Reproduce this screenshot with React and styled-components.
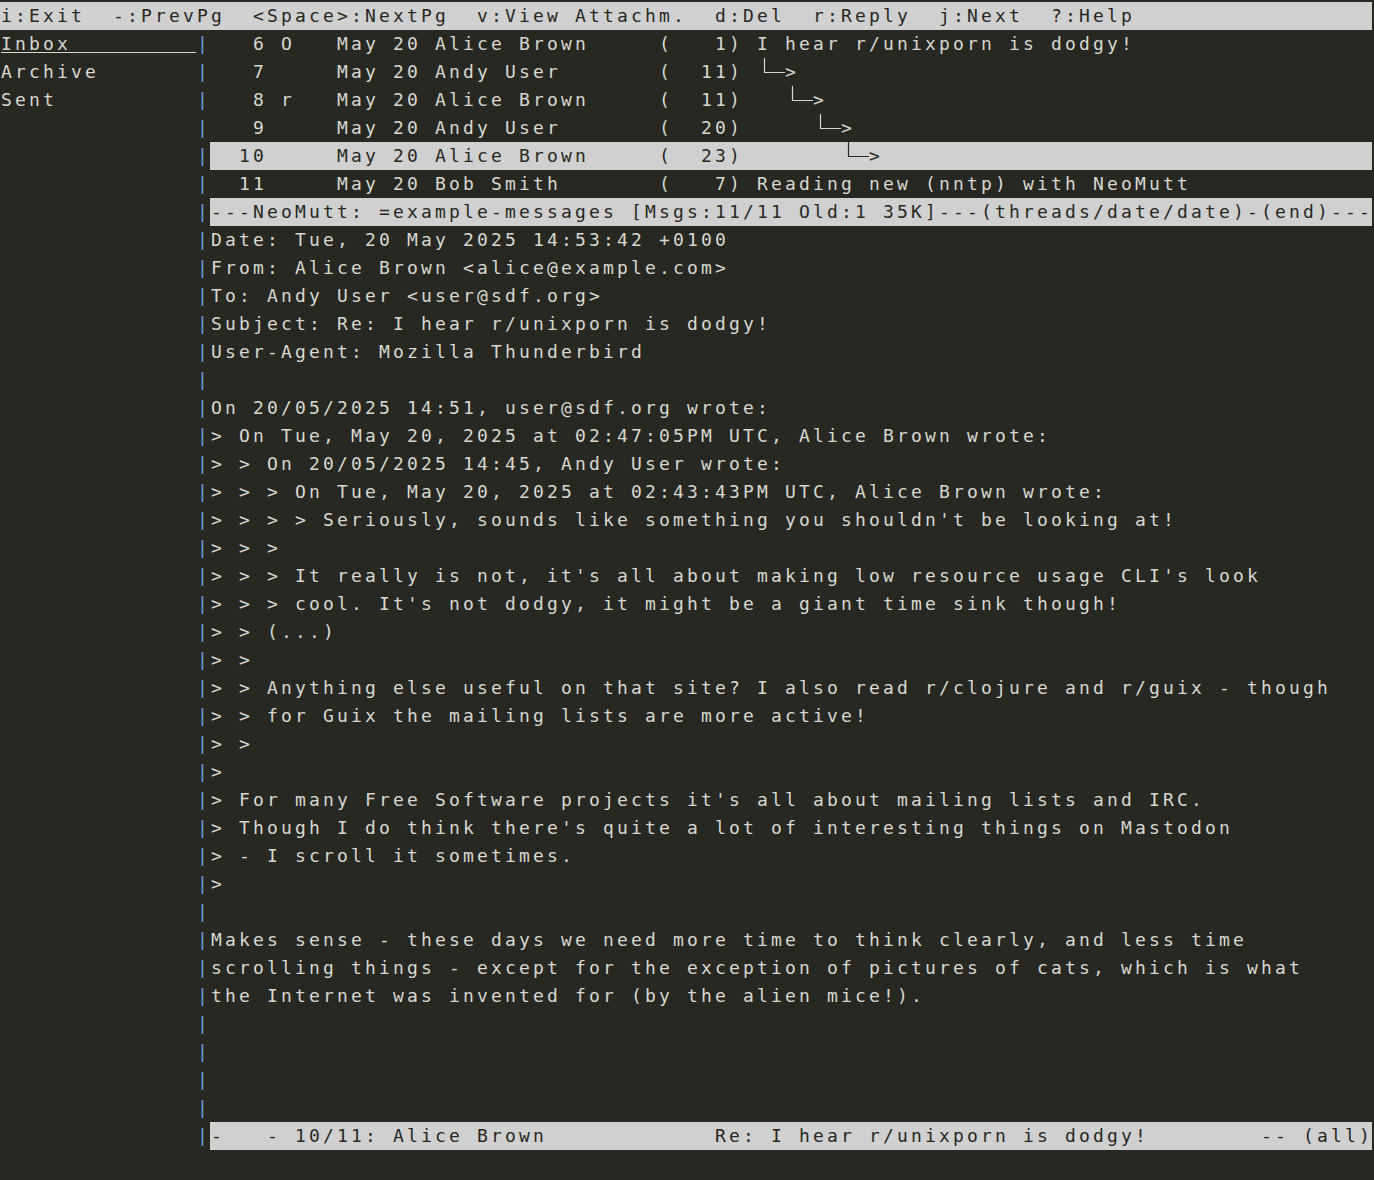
import React from "react";
import styled, { createGlobalStyle } from "styled-components";

const BG = "#272822";
const FG = "#d8d8d1";
const BAR = "#d0d0d0";
const BAR_FG = "#272822";
const PIPE = "#6a9fd6";

const GlobalStyle = createGlobalStyle`
  html, body {
    margin: 0;
    padding: 0;
    background: ${BG};
  }
  body {
    width: 1374px;
    height: 1180px;
    overflow: hidden;
  }
`;

const Screen = styled.div`
  width: 1374px;
  height: 1180px;
  box-sizing: border-box;
  padding-top: 2px;
  background: ${BG};
  color: ${FG};
  font-family: "DejaVu Sans Mono", "Liberation Mono", monospace;
  font-size: 18px;
  letter-spacing: 3.163px;
  -webkit-font-smoothing: antialiased;
`;

const Line = styled.div`
  height: 28px;
  line-height: 28px;
  padding-left: 1px;
  white-space: pre;
  overflow: hidden;
  background: ${(p) => (p.$inverse ? BAR : "transparent")};
  color: ${(p) => (p.$inverse ? BAR_FG : "inherit")};
`;

const HelpBar = styled(Line)`
  width: 1371px;
`;

const Body = styled.div`
  display: grid;
  grid-template-columns: 196px 14px 1162px;
`;

const Sidebar = styled.div`
  display: flex;
  flex-direction: column;
`;

const MailboxItem = styled(Line)`
  text-decoration: ${(p) => (p.$current ? "underline" : "none")};
  text-underline-offset: 2px;
  text-decoration-thickness: 1px;
`;

const Divider = styled.div`
  display: flex;
  flex-direction: column;
  color: ${PIPE};
`;

const Main = styled.div`
  display: flex;
  flex-direction: column;
`;

const IndexRow = styled(Line)``;

const StatusBar = styled(Line)``;

const PagerLine = styled(Line)``;

const ArrowSvg = styled.svg`
  display: inline-block;
  vertical-align: top;
  width: 28px;
  height: 28px;
`;

const TreeArrow = () => (
  <>
    <ArrowSvg viewBox="0 0 28 28">
      <path d="M7.5 0V14.5H28" fill="none" stroke="currentColor" strokeWidth="1.2" />
    </ArrowSvg>
    {">"}
  </>
);

const pad = (s, n) => (s.length >= n ? s.slice(0, n) : s + " ".repeat(n - s.length));
const lpad = (s, n) => " ".repeat(Math.max(0, n - s.length)) + s;

const messages = [
  { n: "6", flag: "O", from: "Alice Brown", lines: "1", depth: -1, subject: "I hear r/unixporn is dodgy!" },
  { n: "7", flag: "", from: "Andy User", lines: "11", depth: 0 },
  { n: "8", flag: "r", from: "Alice Brown", lines: "11", depth: 1 },
  { n: "9", flag: "", from: "Andy User", lines: "20", depth: 2 },
  { n: "10", flag: "", from: "Alice Brown", lines: "23", depth: 3, selected: true },
  { n: "11", flag: "", from: "Bob Smith", lines: "7", depth: -1, subject: "Reading new (nntp) with NeoMutt" },
];

const pagerLines = [
  "Date: Tue, 20 May 2025 14:53:42 +0100",
  "From: Alice Brown <alice@example.com>",
  "To: Andy User <user@sdf.org>",
  "Subject: Re: I hear r/unixporn is dodgy!",
  "User-Agent: Mozilla Thunderbird",
  "",
  "On 20/05/2025 14:51, user@sdf.org wrote:",
  "> On Tue, May 20, 2025 at 02:47:05PM UTC, Alice Brown wrote:",
  "> > On 20/05/2025 14:45, Andy User wrote:",
  "> > > On Tue, May 20, 2025 at 02:43:43PM UTC, Alice Brown wrote:",
  "> > > > Seriously, sounds like something you shouldn't be looking at!",
  "> > >",
  "> > > It really is not, it's all about making low resource usage CLI's look",
  "> > > cool. It's not dodgy, it might be a giant time sink though!",
  "> > (...)",
  "> >",
  "> > Anything else useful on that site? I also read r/clojure and r/guix - though",
  "> > for Guix the mailing lists are more active!",
  "> >",
  ">",
  "> For many Free Software projects it's all about mailing lists and IRC.",
  "> Though I do think there's quite a lot of interesting things on Mastodon",
  "> - I scroll it sometimes.",
  ">",
  "",
  "Makes sense - these days we need more time to think clearly, and less time",
  "scrolling things - except for the exception of pictures of cats, which is what",
  "the Internet was invented for (by the alien mice!).",
  "",
  "",
  "",
  "",
];

const mailboxes = [
  { name: "Inbox", current: true },
  { name: "Archive" },
  { name: "Sent" },
];

const TOTAL_ROWS = 40;

export default function App() {
  const help = "i:Exit  -:PrevPg  <Space>:NextPg  v:View Attachm.  d:Del  r:Reply  j:Next  ?:Help";
  const status =
    "---NeoMutt: =example-messages [Msgs:11/11 Old:1 35K]---(threads/date/date)-(end)---";
  const pagerStatus =
    "-   - 10/11: Alice Brown" +
    " ".repeat(12) +
    "Re: I hear r/unixporn is dodgy!" +
    " ".repeat(8) +
    "-- (all)";

  return (
    <>
      <GlobalStyle />
      <Screen>
        <HelpBar $inverse>{help}</HelpBar>
        <Body>
          <Sidebar>
            {mailboxes.map((m) => (
              <MailboxItem key={m.name} $current={m.current}>
                {m.current ? pad(m.name, 14) : m.name}
              </MailboxItem>
            ))}
          </Sidebar>
          <Divider>
            {Array.from({ length: TOTAL_ROWS }, (_, i) => (
              <Line key={i}>|</Line>
            ))}
          </Divider>
          <Main>
            {messages.map((m) => {
              const prefix =
                lpad(m.n, 4) +
                " " +
                pad(m.flag, 3) +
                " " +
                "May 20" +
                " " +
                pad(m.from, 15) +
                " (" +
                lpad(m.lines, 4) +
                ") ";
              return (
                <IndexRow key={m.n} $inverse={m.selected}>
                  {prefix}
                  {m.depth >= 0 ? (
                    <>
                      {" ".repeat(m.depth * 2)}
                      <TreeArrow />
                    </>
                  ) : (
                    m.subject
                  )}
                </IndexRow>
              );
            })}
            <StatusBar $inverse>{status}</StatusBar>
            {pagerLines.map((t, i) => (
              <PagerLine key={i}>{t}</PagerLine>
            ))}
            <StatusBar $inverse>{pagerStatus}</StatusBar>
          </Main>
        </Body>
      </Screen>
    </>
  );
}
